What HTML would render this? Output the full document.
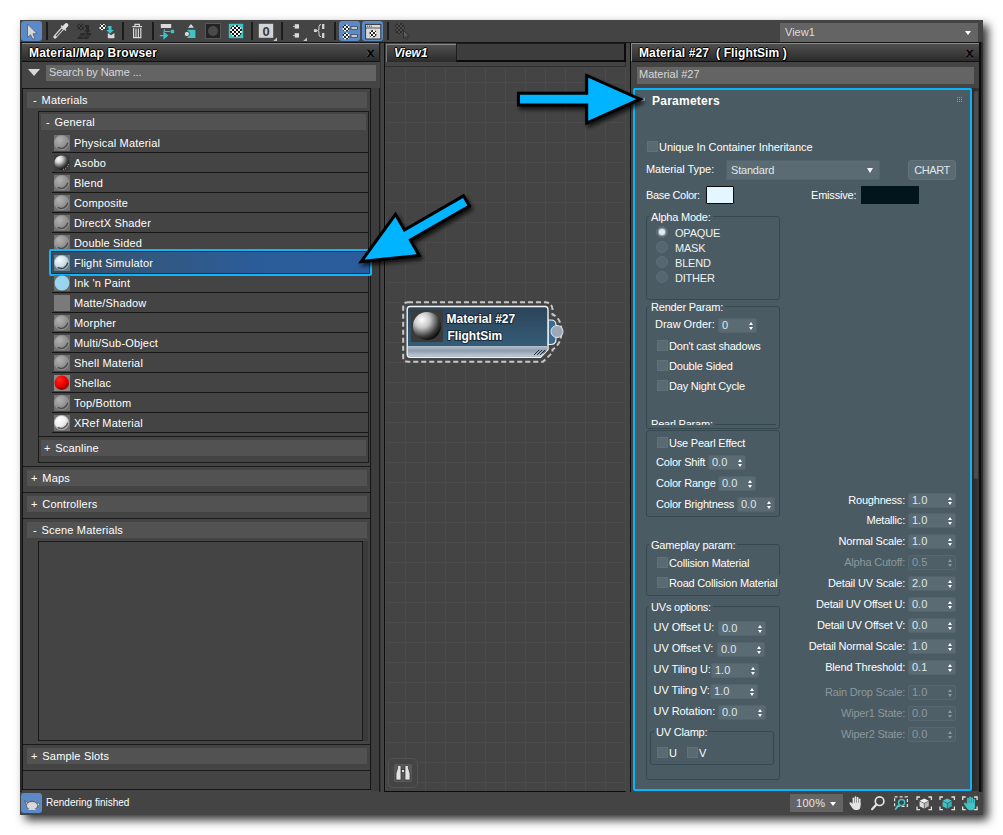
<!DOCTYPE html><html><head><meta charset="utf-8"><title>Slate Material Editor</title><style>
*{box-sizing:border-box;margin:0;padding:0}
html,body{width:1003px;height:835px;overflow:hidden;background:#fff}
body{position:relative;font-family:"Liberation Sans",sans-serif;font-size:11px;color:#fff;line-height:13px}
.a{position:absolute}
.t{position:absolute;white-space:nowrap;line-height:13px;height:13px}
.lp .t{letter-spacing:.17px}
.lp .ht b{font-weight:normal;margin-right:1.5px}
.rp .t,.rp .rl,.rp .gl{letter-spacing:-.2px}
#win{position:absolute;left:20px;top:20px;width:963px;height:795px;background:#444;box-shadow:5px 5px 9px rgba(0,0,0,.8)}
.sep{position:absolute;top:22px;width:1.5px;height:18px;background:#1c1c1c}
.tb{position:absolute;border-radius:3px;background:#5b8ac6}
.title{position:absolute;height:19px;background:linear-gradient(#4f4f4f,#2b2b2b);border-top:1px solid #8a8a8a;border-bottom:1px solid #111;font-weight:bold;font-size:12px;line-height:18px;letter-spacing:.2px;color:#fff;text-shadow:1px 1px 0 #000,-1px 0 0 #000,0 -1px 0 #000,1px 0 0 #000,0 1px 0 #000;white-space:nowrap}
.hdr{position:absolute;background:#525252;height:16px}
.row{position:absolute;left:52px;width:316px;height:20px;border-bottom:1px solid #151515}
.ico{position:absolute;left:54px;width:16px;height:16px}
.grp{position:absolute;border:1px solid #35474f;border-radius:3px}
.gl{position:absolute;background:#4a5b63;padding:0 2px;white-space:nowrap;line-height:13px;height:13px}
.cb{position:absolute;width:10.5px;height:10.5px;background:#5a6a72;border:1px solid #61717a}
.sp{position:absolute;height:15px;background:#5b6b73;border:1px solid #53646c;border-radius:2px;color:#dfe8ec;padding-left:3px;line-height:12px;font-size:11px}
.sp.d{background:#4e5f67;border-color:#56676f;color:#8c9aa2}
.sp:after{content:"";position:absolute;right:3px;top:3px;border:2.5px solid transparent;border-top:0;border-bottom:3px solid #fff}
.sp:before{content:"";position:absolute;right:3px;top:8px;border:2.5px solid transparent;border-bottom:0;border-top:3px solid #fff}
.sp.d:after{border-bottom-color:#8c989e}.sp.d:before{border-top-color:#8c989e}
.rl{position:absolute;right:98px;white-space:nowrap;text-align:right;line-height:13px}
.dis{color:#8c989e}
.rad{position:absolute;width:12px;height:12px;border-radius:50%;background:#566670;border:1px solid #5e6e78}
</style></head><body><svg width="0" height="0" style="position:absolute"><defs>
<radialGradient id="g1" cx=".36" cy=".32" r=".75"><stop offset="0" stop-color="#b2b2b2"/><stop offset=".6" stop-color="#949494"/><stop offset="1" stop-color="#808080"/></radialGradient>
<radialGradient id="g2" cx=".3" cy=".25" r=".85"><stop offset="0" stop-color="#fff"/><stop offset=".3" stop-color="#d0d0d0"/><stop offset=".7" stop-color="#404040"/><stop offset="1" stop-color="#000"/></radialGradient>
<radialGradient id="g3" cx=".35" cy=".3" r=".8"><stop offset="0" stop-color="#ff2a1a"/><stop offset=".5" stop-color="#f00000"/><stop offset="1" stop-color="#a80000"/></radialGradient>
<radialGradient id="g4" cx=".35" cy=".3" r=".8"><stop offset="0" stop-color="#fff"/><stop offset=".55" stop-color="#ececec"/><stop offset="1" stop-color="#a8a8a8"/></radialGradient>
<radialGradient id="g5" cx=".35" cy=".3" r=".8"><stop offset="0" stop-color="#f4fbff"/><stop offset=".55" stop-color="#cfe0e8"/><stop offset="1" stop-color="#8aa2ae"/></radialGradient>
</defs></svg>
<div id="win"></div>
<div class="tb" style="left:21px;top:21px;width:21px;height:20px"></div>
<div class="sep" style="left:46px"></div>
<div class="sep" style="left:122px"></div>
<div class="sep" style="left:152px"></div>
<div class="sep" style="left:251px"></div>
<div class="sep" style="left:281px"></div>
<div class="sep" style="left:334px"></div>
<div class="sep" style="left:387px"></div>
<div class="tb" style="left:339px;top:21px;width:21px;height:20px"></div>
<div class="tb" style="left:362px;top:21px;width:21px;height:20px"></div>
<svg class="a" style="left:0;top:0" width="1003" height="44" viewBox="0 0 1003 44"><path d="M27.5,24 L27.5,37.5 L30.6,34.8 L32.8,39.3 L35,38.2 L32.9,33.9 L37,33.5 Z" fill="#d6d6d6" stroke="#4a5a70" stroke-width=".8"/><g stroke="#d9d9d9" fill="none" stroke-linecap="round"><path d="M55,37 L57,34.5 L63.5,27.5" stroke-width="3.4"/><path d="M56.4,35.6 L63.5,27.8" stroke="#444" stroke-width="1.3"/><path d="M63.8,27.8 L66.4,25.2" stroke-width="4" stroke="#e2e2e2"/><path d="M61.5,26 L65.5,30" stroke-width="1.6"/></g><clipPath id="ck3"><circle cx="80.5" cy="27" r="3.6"/></clipPath><g clip-path="url(#ck3)"><rect x="76.9" y="23.4" width="7.2" height="7.2" fill="#262626"/><rect x="76" y="23" width="2" height="2" fill="#444"/><rect x="76" y="27" width="2" height="2" fill="#444"/><rect x="76" y="31" width="2" height="2" fill="#444"/><rect x="78" y="25" width="2" height="2" fill="#444"/><rect x="78" y="29" width="2" height="2" fill="#444"/><rect x="80" y="23" width="2" height="2" fill="#444"/><rect x="80" y="27" width="2" height="2" fill="#444"/><rect x="80" y="31" width="2" height="2" fill="#444"/><rect x="82" y="25" width="2" height="2" fill="#444"/><rect x="82" y="29" width="2" height="2" fill="#444"/><rect x="84" y="23" width="2" height="2" fill="#444"/><rect x="84" y="27" width="2" height="2" fill="#444"/><rect x="84" y="31" width="2" height="2" fill="#444"/></g><path d="M85,25 h4 v5 h2 l-3.5,3.5 l-3.5,-3.5 h2 v-2.5 h-1 z" fill="#2a2a2a"/><path d="M81,33 h11 l-4,6 h-11 z" fill="#2a2a2a"/><path d="M79,36 h11 M86.5,33 l-4,6" stroke="#444" stroke-width=".8"/><clipPath id="ck4"><circle cx="102.5" cy="27" r="3.2"/></clipPath><g clip-path="url(#ck4)"><rect x="99.3" y="23.8" width="6.4" height="6.4" fill="#333"/><rect x="99" y="23" width="2" height="2" fill="#fff"/><rect x="99" y="27" width="2" height="2" fill="#fff"/><rect x="99" y="31" width="2" height="2" fill="#fff"/><rect x="101" y="25" width="2" height="2" fill="#fff"/><rect x="101" y="29" width="2" height="2" fill="#fff"/><rect x="103" y="23" width="2" height="2" fill="#fff"/><rect x="103" y="27" width="2" height="2" fill="#fff"/><rect x="103" y="31" width="2" height="2" fill="#fff"/><rect x="105" y="25" width="2" height="2" fill="#fff"/><rect x="105" y="29" width="2" height="2" fill="#fff"/><rect x="107" y="23" width="2" height="2" fill="#fff"/><rect x="107" y="27" width="2" height="2" fill="#fff"/><rect x="107" y="31" width="2" height="2" fill="#fff"/></g><path d="M108.5,26 h3 v4 h2.3 l-3.8,3.8 l-3.8,-3.8 h2.3 v-2.2 h-1.2 z" fill="#3fc3c6"/><path d="M107.8,33 l3.3,2.2 l3.3,-2.2 v5.2 h-6.6 z" fill="#d9d9d9"/><g fill="none" stroke="#d9d9d9" stroke-width="1.2"><path d="M132.3,26.6 h9.8"/><path d="M135,26 v-1.6 h4.4 v1.6"/><path d="M133.6,28 v9.6 h7.2 v-9.6"/><path d="M136,28.5 v8.8 M138.4,28.5 v8.8"/></g><rect x="160.8" y="24" width="10.4" height="4" fill="#d9d9d9"/><path d="M164.3,29.3 v2.2 h5.8" fill="none" stroke="#3fc3c6" stroke-width="1.2"/><rect x="170.7" y="29.8" width="3.4" height="3.4" fill="#3fc3c6"/><path d="M159.8,35.6 h5 M164,32.8 l3.4,2.8 l-3.4,2.8 z" fill="#3fc3c6" stroke="#3fc3c6" stroke-width="1.2"/><path d="M188,27.8 l3,-3.8 l3,3.8 z" fill="#d9d9d9"/><rect x="187.4" y="29.8" width="8" height="8.2" fill="#3fc3c6"/><circle cx="186.9" cy="34" r="2.6" fill="#d9d9d9" stroke="#333" stroke-width=".8"/><rect x="205.5" y="23.5" width="15" height="15" fill="#232323" stroke="#575757" stroke-width="1"/><circle cx="213" cy="31" r="5" fill="#4a4a4a"/><rect x="228.8" y="23.8" width="14.4" height="14.4" fill="#3fc3c6"/><clipPath id="ck9"><circle cx="236" cy="31" r="6"/></clipPath><g clip-path="url(#ck9)"><rect x="230" y="25" width="12" height="12" fill="#111"/><rect x="230" y="25" width="2" height="2" fill="#fff"/><rect x="230" y="29" width="2" height="2" fill="#fff"/><rect x="230" y="33" width="2" height="2" fill="#fff"/><rect x="230" y="37" width="2" height="2" fill="#fff"/><rect x="232" y="27" width="2" height="2" fill="#fff"/><rect x="232" y="31" width="2" height="2" fill="#fff"/><rect x="232" y="35" width="2" height="2" fill="#fff"/><rect x="232" y="39" width="2" height="2" fill="#fff"/><rect x="234" y="25" width="2" height="2" fill="#fff"/><rect x="234" y="29" width="2" height="2" fill="#fff"/><rect x="234" y="33" width="2" height="2" fill="#fff"/><rect x="234" y="37" width="2" height="2" fill="#fff"/><rect x="236" y="27" width="2" height="2" fill="#fff"/><rect x="236" y="31" width="2" height="2" fill="#fff"/><rect x="236" y="35" width="2" height="2" fill="#fff"/><rect x="236" y="39" width="2" height="2" fill="#fff"/><rect x="238" y="25" width="2" height="2" fill="#fff"/><rect x="238" y="29" width="2" height="2" fill="#fff"/><rect x="238" y="33" width="2" height="2" fill="#fff"/><rect x="238" y="37" width="2" height="2" fill="#fff"/><rect x="240" y="27" width="2" height="2" fill="#fff"/><rect x="240" y="31" width="2" height="2" fill="#fff"/><rect x="240" y="35" width="2" height="2" fill="#fff"/><rect x="240" y="39" width="2" height="2" fill="#fff"/><rect x="242" y="25" width="2" height="2" fill="#fff"/><rect x="242" y="29" width="2" height="2" fill="#fff"/><rect x="242" y="33" width="2" height="2" fill="#fff"/><rect x="242" y="37" width="2" height="2" fill="#fff"/><rect x="244" y="27" width="2" height="2" fill="#fff"/><rect x="244" y="31" width="2" height="2" fill="#fff"/><rect x="244" y="35" width="2" height="2" fill="#fff"/><rect x="244" y="39" width="2" height="2" fill="#fff"/></g><rect x="258.8" y="23.8" width="14.4" height="14" fill="#d4d4d4"/><text x="266" y="35.6" text-anchor="middle" font-family="Liberation Sans, sans-serif" font-weight="bold" font-size="13" fill="#3a3a3a">0</text><path d="M277,37.4 v3.6 h-3.8 z" fill="#c8c8c8"/><rect x="294.7" y="24.2" width="4.3" height="4.4" fill="#d9d9d9"/><rect x="294.7" y="33.2" width="4.3" height="4.4" fill="#d9d9d9"/><rect x="293.2" y="26" width="1.5" height="1" fill="#d9d9d9"/><rect x="293.2" y="35" width="1.5" height="1" fill="#d9d9d9"/><path d="M307,37.4 v3.6 h-3.8 z" fill="#c8c8c8"/><rect x="314" y="29.2" width="2.8" height="2.8" fill="#d9d9d9"/><path d="M321,24.5 q-2,0 -2,2 v2.5 q0,1.6 -1.6,1.6 q1.6,0 1.6,1.6 v2.5 q0,2 2,2" fill="none" stroke="#d9d9d9" stroke-width="1"/><rect x="322.1" y="24" width="2.2" height="5" fill="#d9d9d9"/><rect x="322.1" y="33" width="2.2" height="5" fill="#d9d9d9"/><clipPath id="ck13a"><circle cx="346" cy="28" r="3.6"/></clipPath><g clip-path="url(#ck13a)"><rect x="342.4" y="24.4" width="7.2" height="7.2" fill="#222"/><rect x="342" y="24" width="2" height="2" fill="#fff"/><rect x="342" y="28" width="2" height="2" fill="#fff"/><rect x="342" y="32" width="2" height="2" fill="#fff"/><rect x="344" y="26" width="2" height="2" fill="#fff"/><rect x="344" y="30" width="2" height="2" fill="#fff"/><rect x="346" y="24" width="2" height="2" fill="#fff"/><rect x="346" y="28" width="2" height="2" fill="#fff"/><rect x="346" y="32" width="2" height="2" fill="#fff"/><rect x="348" y="26" width="2" height="2" fill="#fff"/><rect x="348" y="30" width="2" height="2" fill="#fff"/><rect x="350" y="24" width="2" height="2" fill="#fff"/><rect x="350" y="28" width="2" height="2" fill="#fff"/><rect x="350" y="32" width="2" height="2" fill="#fff"/></g><clipPath id="ck13b"><circle cx="346" cy="36" r="3.6"/></clipPath><g clip-path="url(#ck13b)"><rect x="342.4" y="32.4" width="7.2" height="7.2" fill="#222"/><rect x="342" y="32" width="2" height="2" fill="#fff"/><rect x="342" y="36" width="2" height="2" fill="#fff"/><rect x="342" y="40" width="2" height="2" fill="#fff"/><rect x="344" y="34" width="2" height="2" fill="#fff"/><rect x="344" y="38" width="2" height="2" fill="#fff"/><rect x="346" y="32" width="2" height="2" fill="#fff"/><rect x="346" y="36" width="2" height="2" fill="#fff"/><rect x="346" y="40" width="2" height="2" fill="#fff"/><rect x="348" y="34" width="2" height="2" fill="#fff"/><rect x="348" y="38" width="2" height="2" fill="#fff"/><rect x="350" y="32" width="2" height="2" fill="#fff"/><rect x="350" y="36" width="2" height="2" fill="#fff"/><rect x="350" y="40" width="2" height="2" fill="#fff"/></g><rect x="351" y="26.8" width="6.4" height="2.4" fill="#eee" stroke="#333" stroke-width=".8"/><rect x="351" y="34.8" width="6.4" height="2.4" fill="#eee" stroke="#333" stroke-width=".8"/><rect x="365.6" y="24.4" width="15.2" height="14.6" fill="#dadada" stroke="#333" stroke-width="1"/><path d="M365.6,28 h15.2" stroke="#333" stroke-width=".8"/><path d="M367.2,26.2 h4.6" stroke="#333" stroke-width="1" stroke-dasharray="1 .8"/><clipPath id="ck14"><circle cx="373" cy="33.8" r="3.7"/></clipPath><g clip-path="url(#ck14)"><rect x="369.3" y="30.099999999999998" width="7.4" height="7.4" fill="#222"/><rect x="369" y="30" width="2" height="2" fill="#fff"/><rect x="369" y="34" width="2" height="2" fill="#fff"/><rect x="369" y="38" width="2" height="2" fill="#fff"/><rect x="371" y="32" width="2" height="2" fill="#fff"/><rect x="371" y="36" width="2" height="2" fill="#fff"/><rect x="373" y="30" width="2" height="2" fill="#fff"/><rect x="373" y="34" width="2" height="2" fill="#fff"/><rect x="373" y="38" width="2" height="2" fill="#fff"/><rect x="375" y="32" width="2" height="2" fill="#fff"/><rect x="375" y="36" width="2" height="2" fill="#fff"/><rect x="377" y="30" width="2" height="2" fill="#fff"/><rect x="377" y="34" width="2" height="2" fill="#fff"/><rect x="377" y="38" width="2" height="2" fill="#fff"/></g><clipPath id="ck15"><circle cx="399.8" cy="28.5" r="5.5"/></clipPath><g clip-path="url(#ck15)"><rect x="394.3" y="23.0" width="11.0" height="11.0" fill="#2b2b2b"/><rect x="394" y="23" width="2" height="2" fill="#505050"/><rect x="394" y="27" width="2" height="2" fill="#505050"/><rect x="394" y="31" width="2" height="2" fill="#505050"/><rect x="394" y="35" width="2" height="2" fill="#505050"/><rect x="396" y="25" width="2" height="2" fill="#505050"/><rect x="396" y="29" width="2" height="2" fill="#505050"/><rect x="396" y="33" width="2" height="2" fill="#505050"/><rect x="398" y="23" width="2" height="2" fill="#505050"/><rect x="398" y="27" width="2" height="2" fill="#505050"/><rect x="398" y="31" width="2" height="2" fill="#505050"/><rect x="398" y="35" width="2" height="2" fill="#505050"/><rect x="400" y="25" width="2" height="2" fill="#505050"/><rect x="400" y="29" width="2" height="2" fill="#505050"/><rect x="400" y="33" width="2" height="2" fill="#505050"/><rect x="402" y="23" width="2" height="2" fill="#505050"/><rect x="402" y="27" width="2" height="2" fill="#505050"/><rect x="402" y="31" width="2" height="2" fill="#505050"/><rect x="402" y="35" width="2" height="2" fill="#505050"/><rect x="404" y="25" width="2" height="2" fill="#505050"/><rect x="404" y="29" width="2" height="2" fill="#505050"/><rect x="404" y="33" width="2" height="2" fill="#505050"/><rect x="406" y="23" width="2" height="2" fill="#505050"/><rect x="406" y="27" width="2" height="2" fill="#505050"/><rect x="406" y="31" width="2" height="2" fill="#505050"/><rect x="406" y="35" width="2" height="2" fill="#505050"/></g><path d="M403.5,30.5 v8 l2,-1.8 l1.4,2.8 l1.3,-.7 l-1.4,-2.7 l2.6,-.2 z" fill="#5a5a5a" stroke="#2b2b2b" stroke-width=".8"/></svg>
<div class="a" style="left:780px;top:23px;width:198px;height:19px;background:#646464"></div>
<div class="t" style="left:785px;top:26px;color:#dcdcdc;font-size:11px">View1</div>
<div class="a" style="left:965px;top:31px;border:3px solid transparent;border-bottom:0;border-top:4px solid #fff"></div>
<div class="lp">
<div class="a" style="left:379px;top:42px;width:2px;height:750px;background:linear-gradient(90deg,#1c1c1c 50%,#333 50%)"></div>
<div class="a" style="left:20px;top:42px;width:2px;height:750px;background:#2a2a2a"></div>
<div class="title" style="left:22px;top:43px;width:357px;padding-left:7px">Material/Map Browser</div>
<div class="t" style="left:367px;top:46px;font-weight:bold;font-size:13px;color:#000;letter-spacing:0;-webkit-text-stroke:.5px #000;text-shadow:0 0 1px #aaa,0 0 1px #aaa,.5px 0 0 #000">x</div>
<div class="a" style="left:22px;top:62px;width:358px;height:26px;background:#444"></div>
<div class="a" style="left:28px;top:69px;border:6px solid transparent;border-bottom:0;border-top:7px solid #d8d8d8"></div>
<div class="a" style="left:46px;top:65px;width:330px;height:16px;background:#646464"></div>
<div class="t" style="left:49px;top:66px;color:#d6d6d6;font-size:11px;letter-spacing:-.09px">Search by Name ...</div>
<div class="a" style="left:22px;top:88px;width:349px;height:702px;background:#444;border:1px solid #141414"></div>
<div class="a" style="left:371px;top:88px;width:8px;height:703px;background:#3c3c3c"></div>
<div class="hdr" style="left:27px;top:92px;width:340px"></div><div class="t ht" style="left:33px;top:94px"><b>-</b> Materials</div>
<div class="a" style="left:38px;top:111px;width:331px;height:352px;border:1px solid #1a1a1a"></div>
<div class="hdr" style="left:41px;top:114px;width:325px"></div><div class="t ht" style="left:46px;top:116px"><b>-</b> General</div>
<div class="row" style="top:133px"></div>
<div class="ico" style="top:135px" ><svg width="16" height="16"><rect width="16" height="16" fill="#707070"/><circle cx="7.6" cy="7.6" r="7.2" fill="url(#g1)" stroke="#9c9c9c" stroke-width=".7"/><path d="M4.2,12.6 A6.4,6.4 0 0 0 13.6,8.2" fill="none" stroke="#4e4e4e" stroke-width="1.5" stroke-linecap="round"/></svg></div>
<div class="t" style="left:74px;top:137px">Physical Material</div>
<div class="row" style="top:153px"></div>
<div class="ico" style="top:155px" ><svg width="16" height="16"><rect width="16" height="16" fill="#3c3c3c"/><circle cx="7.6" cy="7.6" r="7.2" fill="url(#g2)"/><path d="M9,14.4 A7,7 0 0 0 14.4,9" fill="none" stroke="#cfcfcf" stroke-width=".9" stroke-dasharray="1.2 1"/></svg></div>
<div class="t" style="left:74px;top:157px">Asobo</div>
<div class="row" style="top:173px"></div>
<div class="ico" style="top:175px" ><svg width="16" height="16"><rect width="16" height="16" fill="#707070"/><circle cx="7.6" cy="7.6" r="7.2" fill="url(#g1)" stroke="#9c9c9c" stroke-width=".7"/><path d="M4.2,12.6 A6.4,6.4 0 0 0 13.6,8.2" fill="none" stroke="#4e4e4e" stroke-width="1.5" stroke-linecap="round"/></svg></div>
<div class="t" style="left:74px;top:177px">Blend</div>
<div class="row" style="top:193px"></div>
<div class="ico" style="top:195px" ><svg width="16" height="16"><rect width="16" height="16" fill="#707070"/><circle cx="7.6" cy="7.6" r="7.2" fill="url(#g1)" stroke="#9c9c9c" stroke-width=".7"/><path d="M4.2,12.6 A6.4,6.4 0 0 0 13.6,8.2" fill="none" stroke="#4e4e4e" stroke-width="1.5" stroke-linecap="round"/></svg></div>
<div class="t" style="left:74px;top:197px">Composite</div>
<div class="row" style="top:213px"></div>
<div class="ico" style="top:215px" ><svg width="16" height="16"><rect width="16" height="16" fill="#707070"/><circle cx="7.6" cy="7.6" r="7.2" fill="url(#g1)" stroke="#9c9c9c" stroke-width=".7"/><path d="M4.2,12.6 A6.4,6.4 0 0 0 13.6,8.2" fill="none" stroke="#4e4e4e" stroke-width="1.5" stroke-linecap="round"/></svg></div>
<div class="t" style="left:74px;top:217px">DirectX Shader</div>
<div class="row" style="top:233px"></div>
<div class="ico" style="top:235px" ><svg width="16" height="16"><rect width="16" height="16" fill="#707070"/><circle cx="7.6" cy="7.6" r="7.2" fill="url(#g1)" stroke="#9c9c9c" stroke-width=".7"/><path d="M4.2,12.6 A6.4,6.4 0 0 0 13.6,8.2" fill="none" stroke="#4e4e4e" stroke-width="1.5" stroke-linecap="round"/></svg></div>
<div class="t" style="left:74px;top:237px">Double Sided</div>
<div class="a" style="left:49px;top:249px;width:323px;height:27px;border:2px solid #12b4f6;border-radius:2px;background:#22303c"><div style="position:absolute;left:1px;top:1px;right:1px;bottom:1px;background:linear-gradient(90deg,#3a4c5c,#33587f 30%,#2b5c9a 65%,#2a5c9c)"></div></div>
<div class="ico" style="top:255px" ><svg width="16" height="16"><rect width="16" height="16" fill="#687d8a"/><circle cx="7.6" cy="7.6" r="7.2" fill="url(#g5)" stroke="#b4c6d0" stroke-width=".6"/><path d="M4.2,12.6 A6.4,6.4 0 0 0 13.6,8.2" fill="none" stroke="#33444e" stroke-width="1.4" stroke-linecap="round"/></svg></div>
<div class="t" style="left:74px;top:257px">Flight Simulator</div>
<div class="row" style="top:273px"></div>
<div class="ico" style="top:275px" ><svg width="16" height="16"><rect width="16" height="16" fill="#6c6c6c"/><circle cx="8" cy="8" r="7.4" fill="#97d6ee"/></svg></div>
<div class="t" style="left:74px;top:277px">Ink 'n Paint</div>
<div class="row" style="top:293px"></div>
<div class="ico" style="top:295px" ><svg width="16" height="16"><rect width="16" height="16" fill="#7a7a7a"/></svg></div>
<div class="t" style="left:74px;top:297px">Matte/Shadow</div>
<div class="row" style="top:313px"></div>
<div class="ico" style="top:315px" ><svg width="16" height="16"><rect width="16" height="16" fill="#707070"/><circle cx="7.6" cy="7.6" r="7.2" fill="url(#g1)" stroke="#9c9c9c" stroke-width=".7"/><path d="M4.2,12.6 A6.4,6.4 0 0 0 13.6,8.2" fill="none" stroke="#4e4e4e" stroke-width="1.5" stroke-linecap="round"/></svg></div>
<div class="t" style="left:74px;top:317px">Morpher</div>
<div class="row" style="top:333px"></div>
<div class="ico" style="top:335px" ><svg width="16" height="16"><rect width="16" height="16" fill="#707070"/><circle cx="7.6" cy="7.6" r="7.2" fill="url(#g1)" stroke="#9c9c9c" stroke-width=".7"/><path d="M4.2,12.6 A6.4,6.4 0 0 0 13.6,8.2" fill="none" stroke="#4e4e4e" stroke-width="1.5" stroke-linecap="round"/></svg></div>
<div class="t" style="left:74px;top:337px">Multi/Sub-Object</div>
<div class="row" style="top:353px"></div>
<div class="ico" style="top:355px" ><svg width="16" height="16"><rect width="16" height="16" fill="#707070"/><circle cx="7.6" cy="7.6" r="7.2" fill="url(#g1)" stroke="#9c9c9c" stroke-width=".7"/><path d="M4.2,12.6 A6.4,6.4 0 0 0 13.6,8.2" fill="none" stroke="#4e4e4e" stroke-width="1.5" stroke-linecap="round"/></svg></div>
<div class="t" style="left:74px;top:357px">Shell Material</div>
<div class="row" style="top:373px"></div>
<div class="ico" style="top:375px" ><svg width="16" height="16"><rect width="16" height="16" fill="#868a88"/><circle cx="7.8" cy="7.8" r="7.3" fill="url(#g3)"/><path d="M4.4,12.6 A6.4,6.4 0 0 0 13.4,8.6" fill="none" stroke="#8a0000" stroke-width="1.4" stroke-linecap="round"/></svg></div>
<div class="t" style="left:74px;top:377px">Shellac</div>
<div class="row" style="top:393px"></div>
<div class="ico" style="top:395px" ><svg width="16" height="16"><rect width="16" height="16" fill="#707070"/><circle cx="7.6" cy="7.6" r="7.2" fill="url(#g1)" stroke="#9c9c9c" stroke-width=".7"/><path d="M4.2,12.6 A6.4,6.4 0 0 0 13.6,8.2" fill="none" stroke="#4e4e4e" stroke-width="1.5" stroke-linecap="round"/></svg></div>
<div class="t" style="left:74px;top:397px">Top/Bottom</div>
<div class="row" style="top:413px"></div>
<div class="ico" style="top:415px" ><svg width="16" height="16"><rect width="16" height="16" fill="#707070"/><circle cx="7.6" cy="7.6" r="7.2" fill="url(#g4)" stroke="#bdbdbd" stroke-width=".7"/><path d="M4.2,12.6 A6.4,6.4 0 0 0 13.6,8.2" fill="none" stroke="#5a5a5a" stroke-width="1.5" stroke-linecap="round"/></svg></div>
<div class="t" style="left:74px;top:417px">XRef Material</div>
<div class="a" style="left:39px;top:436px;width:329px;height:1px;background:#1a1a1a"></div>
<div class="hdr" style="left:41px;top:440px;width:325px"></div><div class="t ht" style="left:44px;top:442px"><b>+</b> Scanline</div>
<div class="a" style="left:23px;top:466px;width:347px;height:1px;background:#1a1a1a"></div>
<div class="hdr" style="left:27px;top:470px;width:340px"></div><div class="t ht" style="left:31px;top:472px"><b>+</b> Maps</div>
<div class="a" style="left:23px;top:492px;width:347px;height:1px;background:#1a1a1a"></div>
<div class="hdr" style="left:27px;top:496px;width:340px"></div><div class="t ht" style="left:31px;top:498px"><b>+</b> Controllers</div>
<div class="a" style="left:23px;top:518px;width:347px;height:1px;background:#1a1a1a"></div>
<div class="hdr" style="left:27px;top:522px;width:340px"></div><div class="t ht" style="left:33px;top:524px"><b>-</b> Scene Materials</div>
<div class="a" style="left:23px;top:744px;width:347px;height:1px;background:#1a1a1a"></div>
<div class="hdr" style="left:27px;top:748px;width:340px"></div><div class="t ht" style="left:31px;top:750px"><b>+</b> Sample Slots</div>
<div class="a" style="left:38px;top:541px;width:325px;height:200px;border:1px solid #1a1a1a"></div>
<div class="a" style="left:363px;top:541px;width:5px;height:200px;background:#3a3a3a"></div>
<div class="a" style="left:23px;top:770px;width:347px;height:1px;background:#1a1a1a"></div>
</div>
<div class="a" style="left:384px;top:42px;width:242px;height:750px;background:#444;border-left:1px solid #0c0c0c;border-right:1px solid #2c2c2c;border-bottom:1px solid #0c0c0c"></div>
<div class="title" style="left:386px;top:44px;width:70px;height:18px;line-height:17px;padding-left:7px;font-style:italic;letter-spacing:0;border-left:1px solid #777;border-bottom:0">View1</div>
<div class="a" style="left:456px;top:43px;width:170px;height:19px;background:#3d3d3d;border:1px solid #1c1c1c;border-right:2px solid #0a0a0a;border-bottom:2px solid #0a0a0a"></div>
<div class="a" id="grid" style="left:385px;top:66px;width:241px;height:725px;background-color:#444;background-image:linear-gradient(90deg,#4b4b4b 1px,transparent 1px),linear-gradient(#4b4b4b 1px,transparent 1px);background-size:20px 20px;background-position:0px -4px"></div>
<div class="a" style="left:385px;top:66px;width:241px;height:1px;background:#2e2e2e"></div>
<svg class="a" style="left:395px;top:295px" width="175" height="75" viewBox="395 295 175 75">
<defs>
<linearGradient id="nb" x1="0" y1="0" x2="0" y2="1"><stop offset="0" stop-color="#2b4358"/><stop offset="1" stop-color="#386380"/></linearGradient>
<linearGradient id="nf" x1="0" y1="0" x2="0" y2="1"><stop offset="0" stop-color="#b4c0cc"/><stop offset=".45" stop-color="#8c9cac"/><stop offset="1" stop-color="#c4ccd4"/></linearGradient>
<radialGradient id="sph" cx=".32" cy=".28" r=".8"><stop offset="0" stop-color="#fff"/><stop offset=".35" stop-color="#c8c8c8"/><stop offset=".75" stop-color="#3a3a3a"/><stop offset="1" stop-color="#000"/></radialGradient>
</defs>
<path d="M408,302.2 H545 Q551.5,302.2 552.5,309 V314.5 Q561.5,318.5 561.5,331.5 Q561.5,344 552.5,349.5 L552.5,352.5 L543,361.8 H408 Q403.2,361.8 403.2,357 V307 Q403.2,302.2 408,302.2 Z" fill="none" stroke="#c6c6c6" stroke-width="2" stroke-dasharray="5 3"/>
<path d="M548,320 H551 Q556,320 556,325 V339 Q556,344.5 551,344.5 H548 Z" fill="#3a6a8c" stroke="#e8eef2" stroke-width="1.2"/>
<path d="M410,306.5 H545 Q548,306.5 548,309.5 V349.5 L540.5,357.2 H410 Q407.2,357.2 407.2,354.2 V309.5 Q407.2,306.5 410,306.5 Z" fill="url(#nb)" stroke="#f2f6f8" stroke-width="1.4"/>
<path d="M408,346 H547.3 V349.3 L540.2,356.5 H410 Q408,356.5 408,354.5 Z" fill="url(#nf)"/>
<path d="M534,355 l5,-5 M537,355 l5,-5 M540,355 l5,-5 M543,353.5 l3,-3" stroke="#222e38" stroke-width="1"/>
<rect x="411" y="310" width="32" height="32" fill="#3b3b3b"/>
<circle cx="427" cy="326" r="14" fill="url(#sph)"/>
<circle cx="557" cy="331.5" r="6" fill="#9aa8ba" stroke="#dde4ea" stroke-width="1"/>
<text x="446.5" y="323" font-family="Liberation Sans, sans-serif" font-weight="bold" font-size="12" fill="#fff" stroke="#1a2a38" stroke-width="2" paint-order="stroke" stroke-linejoin="round">Material #27</text>
<text x="447.5" y="340" font-family="Liberation Sans, sans-serif" font-weight="bold" font-size="12" fill="#fff" stroke="#1a2a38" stroke-width="2" paint-order="stroke" stroke-linejoin="round">FlightSim</text>
</svg>
<div class="a" style="left:388px;top:758px;width:30px;height:30px;border:1px solid #535353;border-radius:5px;background:#444"></div>
<div class="a" style="left:394px;top:764px;width:18px;height:18px;border-radius:2px;background:#595959"></div>
<div class="a" style="left:630px;top:42px;width:1px;height:750px;background:#0c0c0c"></div>
<div class="a" style="left:20px;top:42px;width:963px;height:1px;background:#141414"></div>
<div class="title" style="left:631px;top:43px;width:348px;padding-left:7px;border-left:1px solid #888;letter-spacing:.12px">Material #27 &nbsp;( FlightSim )</div>
<div class="t" style="left:966px;top:46px;font-weight:bold;font-size:13px;color:#000;letter-spacing:0;-webkit-text-stroke:.5px #000;text-shadow:0 0 1px #aaa,0 0 1px #aaa,.5px 0 0 #000">x</div>
<div class="a" style="left:631px;top:62px;width:348px;height:26px;background:#444"></div>
<div class="a" style="left:637px;top:67px;width:337px;height:17px;background:#646464"></div>
<div class="t" style="left:639px;top:68px;color:#d8d8d8;font-size:11px">Material #27</div>
<div class="a" id="roll" style="left:633px;top:88px;width:339px;height:703px;background:#4a5b63;border:2px solid #06b6fb;border-radius:2px"></div>
<div class="a" style="left:972px;top:88px;width:7px;height:703px;background:linear-gradient(90deg,#2a2a2a,#363636)"></div>
<div class="a" style="left:974px;top:91px;width:4px;height:388px;background:#4c4c4c;border-radius:2px"></div>
<div class="a" style="left:979px;top:42px;width:2px;height:750px;background:#0c0c0c"></div>
<div class="a" style="left:981px;top:42px;width:2px;height:750px;background:#2c2c2c"></div>
<svg class="a" style="left:956px;top:96px" width="7" height="7"><g fill="#8d9ba3"><rect x="1" y="1" width="1" height="1"/><rect x="3" y="1" width="1" height="1"/><rect x="5" y="1" width="1" height="1"/><rect x="1" y="3" width="1" height="1"/><rect x="3" y="3" width="1" height="1"/><rect x="5" y="3" width="1" height="1"/><rect x="1" y="5" width="1" height="1"/><rect x="3" y="5" width="1" height="1"/><rect x="5" y="5" width="1" height="1"/></g></svg>
<div class="a" style="left:641px;top:97px;border:2.5px solid transparent;border-right-color:#8d9ba3;border-bottom-color:#8d9ba3;width:0;height:0"></div>
<div class="t" style="left:652px;top:95px;font-weight:bold;font-size:12px;letter-spacing:.25px">Parameters</div>
<div class="rp"><div class="cb" style="left:647px;top:141px"></div>
<div class="t" style="left:659px;top:141px"><span style="letter-spacing:-.06px">Unique In Container Inheritance</span></div>
<div class="t" style="left:646px;top:163px;letter-spacing:-.05px">Material Type:</div>
<div class="a" style="left:726px;top:160px;width:154px;height:20px;background:#5b6b73;border:1px solid #53646c;border-radius:1px"></div>
<div class="t" style="left:731px;top:164px;color:#dfe8ec;font-size:11px">Standard</div>
<div class="a" style="left:867px;top:167.5px;border:3px solid transparent;border-bottom:0;border-top:5px solid #f4f4f4"></div>
<div class="a" style="left:908px;top:160px;width:48px;height:20px;background:#5b6b73;border:1px solid #637379;border-radius:3px;text-align:center;line-height:19px;letter-spacing:-.4px;color:#dfe8ec;font-size:11px">CHART</div>
<div class="t" style="left:646px;top:189px;letter-spacing:-.33px">Base Color:</div>
<div class="a" style="left:706px;top:186px;width:28px;height:18px;background:#e4f6ff;border:1px solid #0a0a0a;border-radius:1px"></div>
<div class="t" style="left:811px;top:189px">Emissive:</div>
<div class="a" style="left:861px;top:186px;width:58px;height:18px;background:#03151c"></div>
<div class="grp" style="left:646px;top:216px;width:134px;height:84px"></div>
<div class="gl" style="left:649px;top:211px">Alpha Mode:</div>
<div class="rad" style="left:656px;top:226px"></div>
<div class="t" style="left:675px;top:227px;color:#eef2f4">OPAQUE</div>
<div class="rad" style="left:656px;top:241px"></div>
<div class="t" style="left:675px;top:242px;color:#eef2f4">MASK</div>
<div class="rad" style="left:656px;top:256px"></div>
<div class="t" style="left:675px;top:257px;color:#eef2f4">BLEND</div>
<div class="rad" style="left:656px;top:271px"></div>
<div class="t" style="left:675px;top:272px;color:#eef2f4">DITHER</div>
<div class="a" style="left:659px;top:229px;width:6px;height:6px;border-radius:50%;background:#dfe8ee;box-shadow:0 0 1px 1px #9fb0ba"></div>
<div class="grp" style="left:646px;top:306px;width:134px;height:123px"></div>
<div class="gl" style="left:649px;top:301px">Render Param:</div>
<div class="t" style="left:655px;top:318px;letter-spacing:-.02px">Draw Order:</div>
<div class="sp" style="left:718px;top:318px;width:39px">0</div>
<div class="cb" style="left:657px;top:340px"></div>
<div class="t" style="left:669px;top:340px">Don't cast shadows</div>
<div class="cb" style="left:657px;top:360px"></div>
<div class="t" style="left:669px;top:360px">Double Sided</div>
<div class="cb" style="left:657px;top:380px"></div>
<div class="t" style="left:669px;top:380px">Day Night Cycle</div>
<div class="a" style="left:649px;top:418px;width:128px;height:7px;overflow:hidden"><div class="t" style="left:2px;top:0px">Pearl Param:</div></div>
<div class="a" style="left:715px;top:424px;width:61px;height:1px;background:#35474f"></div>
<div class="grp" style="left:646px;top:430px;width:134px;height:87px"></div>
<div class="cb" style="left:657px;top:437px"></div>
<div class="t" style="left:669px;top:437px">Use Pearl Effect</div>
<div class="t" style="left:656px;top:456px">Color Shift</div>
<div class="sp" style="left:708px;top:455px;width:38px">0.0</div>
<div class="t" style="left:656px;top:477px">Color Range</div>
<div class="sp" style="left:718px;top:476px;width:38px">0.0</div>
<div class="t" style="left:656px;top:498px">Color Brightness</div>
<div class="sp" style="left:737px;top:497px;width:38px">0.0</div>
<div class="grp" style="left:646px;top:544px;width:134px;height:52px"></div>
<div class="gl" style="left:649px;top:539px">Gameplay param:</div>
<div class="cb" style="left:657px;top:557px"></div>
<div class="t" style="left:669px;top:557px">Collision Material</div>
<div class="a" style="left:770px;top:575px;width:12px;height:14px;background:#4a5b63"></div>
<div class="cb" style="left:657px;top:577px"></div>
<div class="t" style="left:669px;top:577px">Road Collision Material</div>
<div class="grp" style="left:646px;top:606px;width:134px;height:174px"></div>
<div class="gl" style="left:649px;top:601px">UVs options:</div>
<div class="t" style="left:653.5px;top:621px;letter-spacing:-.06px">UV Offset U:</div>
<div class="sp" style="left:718px;top:621px;width:48px">0.0</div>
<div class="t" style="left:653.5px;top:642px;letter-spacing:-.06px">UV Offset V:</div>
<div class="sp" style="left:717px;top:642px;width:48px">0.0</div>
<div class="t" style="left:653.5px;top:663px;letter-spacing:-.06px">UV Tiling U:</div>
<div class="sp" style="left:711px;top:663px;width:48px">1.0</div>
<div class="t" style="left:653.5px;top:684px;letter-spacing:-.06px">UV Tiling V:</div>
<div class="sp" style="left:710px;top:684px;width:48px">1.0</div>
<div class="t" style="left:653.5px;top:705px;letter-spacing:-.06px">UV Rotation:</div>
<div class="sp" style="left:718px;top:705px;width:48px">0.0</div>
<div class="grp" style="left:650px;top:731px;width:124px;height:34px"></div>
<div class="gl" style="left:654px;top:726px">UV Clamp:</div>
<div class="cb" style="left:657px;top:747px"></div>
<div class="t" style="left:669px;top:747px">U</div>
<div class="cb" style="left:687px;top:747px"></div>
<div class="t" style="left:699px;top:747px">V</div>
<div class="rl" style="top:494px">Roughness:</div>
<div class="sp" style="left:908px;top:493px;width:48px">1.0</div>
<div class="rl" style="top:514px">Metallic:</div>
<div class="sp" style="left:908px;top:513px;width:48px">1.0</div>
<div class="rl" style="top:535px">Normal Scale:</div>
<div class="sp" style="left:908px;top:534px;width:48px">1.0</div>
<div class="rl dis" style="top:556px">Alpha Cutoff:</div>
<div class="sp d" style="left:908px;top:555px;width:48px">0.5</div>
<div class="rl" style="top:577px">Detail UV Scale:</div>
<div class="sp" style="left:908px;top:576px;width:48px">2.0</div>
<div class="rl" style="top:598px">Detail UV Offset U:</div>
<div class="sp" style="left:908px;top:597px;width:48px">0.0</div>
<div class="rl" style="top:619px">Detail UV Offset V:</div>
<div class="sp" style="left:908px;top:618px;width:48px">0.0</div>
<div class="rl" style="top:640px">Detail Normal Scale:</div>
<div class="sp" style="left:908px;top:639px;width:48px">1.0</div>
<div class="rl" style="top:661px">Blend Threshold:</div>
<div class="sp" style="left:908px;top:660px;width:48px">0.1</div>
<div class="rl dis" style="top:686px">Rain Drop Scale:</div>
<div class="sp d" style="left:908px;top:685px;width:48px">1.0</div>
<div class="rl dis" style="top:707px">Wiper1 State:</div>
<div class="sp d" style="left:908px;top:706px;width:48px">0.0</div>
<div class="rl dis" style="top:728px">Wiper2 State:</div>
<div class="sp d" style="left:908px;top:727px;width:48px">0.0</div></div>
<div class="a" style="left:20px;top:792px;width:963px;height:23px;background:#444"></div>
<div class="tb" style="left:21px;top:793px;width:21px;height:20px;border-radius:3px"></div>
<div class="t" style="left:46px;top:796px;font-size:10px">Rendering finished</div>
<div class="a" style="left:790px;top:794px;width:53px;height:18px;background:#646464"></div>
<div class="t" style="left:796px;top:797px;color:#e8e8e8;font-size:11px;letter-spacing:.3px">100%</div>
<div class="a" style="left:830px;top:802px;border:3.5px solid transparent;border-bottom:0;border-top:4px solid #fff"></div>
<svg class="a" style="left:0;top:790px" width="1003" height="26" viewBox="0 790 1003 26"><g fill="#d8d8d8" stroke="#4a4a4a" stroke-width=".7"><path d="M24.6,800.6 q2.6,.8 3.8,3.4 l-1.2,2.4 q-1.2,-3 -2.6,-5.8 z"/><path d="M37,803 q3,-.8 2.6,1.6 q-.4,1.8 -2.8,2.2 z"/><ellipse cx="32" cy="805.6" rx="5.6" ry="4.2"/><path d="M28.4,809 h7.2 v.9 h-7.2 z" stroke="none"/><path d="M30.2,801.6 q1.8,-2.6 3.6,0 z"/></g><g fill="#e4e4e4"><rect x="852.6" y="797.5" width="1.7" height="7" rx=".8"/><rect x="854.7" y="796.3" width="1.7" height="8" rx=".8"/><rect x="856.8" y="796.9" width="1.7" height="8" rx=".8"/><rect x="858.9" y="798.5" width="1.6" height="7" rx=".8"/><path d="M852.6,802.8 h7.9 v3.5 q0,3.6 -3.4,3.6 h-1.6 q-2,0 -3.2,-2 l-2.6,-4 q-.6,-1.2 .4,-1.6 q.9,-.3 1.6,.6 l.9,1.2 z"/></g><circle cx="879.6" cy="801.2" r="4.3" fill="none" stroke="#e4e4e4" stroke-width="1.7"/><path d="M876.4,804.6 l-4.3,4.6" stroke="#e4e4e4" stroke-width="2.2" stroke-linecap="round"/><rect x="894.6" y="796.9" width="12.8" height="9.4" fill="none" stroke="#e4e4e4" stroke-width="1.2" stroke-dasharray="3 2"/><circle cx="901.6" cy="802.6" r="3.1" fill="#444" stroke="#3fc3c6" stroke-width="1.4"/><path d="M899.2,805 l-3.6,4" stroke="#3fc3c6" stroke-width="1.8" stroke-linecap="round"/><path d="M917,800 v-3 h3 M928.4,797 h3 v3 M931.4,806.6 v3 h-3 M920,809.6 h-3 v-3" fill="none" stroke="#e4e4e4" stroke-width="1.3"/><path d="M924.2,798.4 l4.6,2.3 l-4.6,2.3 l-4.6,-2.3 z" fill="#f0f0f0"/><path d="M919.6,801.3 l4.3,2.2 v5 l-4.3,-2.3 z" fill="#dcdcdc"/><path d="M928.8000000000001,801.3 l-4.3,2.2 v5 l4.3,-2.3 z" fill="#b8b8b8"/><path d="M940,800 v-3 h3 M951.4,797 h3 v3 M954.4,806.6 v3 h-3 M943,809.6 h-3 v-3" fill="none" stroke="#e4e4e4" stroke-width="1.3"/><path d="M947.2,798.4 l4.6,2.3 l-4.6,2.3 l-4.6,-2.3 z" fill="#46c8cc"/><path d="M942.6,801.3 l4.3,2.2 v5 l-4.3,-2.3 z" fill="#3fc3c6"/><path d="M951.8000000000001,801.3 l-4.3,2.2 v5 l4.3,-2.3 z" fill="#36aeb2"/><path d="M962.7,800 v-3 h3 M974.1,797 h3 v3 M977.1,806.6 v3 h-3 M965.7,809.6 h-3 v-3" fill="none" stroke="#e4e4e4" stroke-width="1.3"/><g fill="#3fc3c6"><rect x="967.1" y="797.8000000000001" width="1.7" height="7" rx=".8"/><rect x="969.2" y="796.6" width="1.7" height="8" rx=".8"/><rect x="971.3" y="797.2" width="1.7" height="8" rx=".8"/><rect x="973.4" y="798.8000000000001" width="1.6" height="7" rx=".8"/><path d="M967.1,803.1 h7.9 v3.5 q0,3.6 -3.4,3.6 h-1.6 q-2,0 -3.2,-2 l-2.6,-4 q-.6,-1.2 .4,-1.6 q.9,-.3 1.6,.6 l.9,1.2 z"/></g></svg><svg class="a" style="left:394px;top:764px" width="18" height="18" viewBox="394 764 18 18"><g fill="#e2e2e2" stroke="#2a2a2a" stroke-width=".7"><path d="M396,780 v-6.5 l1.6,-5.5 v-1.4 q0,-1.2 1.2,-1.2 h1 q1.2,0 1.2,1.2 v13.4 z"/><path d="M410,780 v-6.5 l-1.6,-5.5 v-1.4 q0,-1.2 -1.2,-1.2 h-1 q-1.2,0 -1.2,1.2 v13.4 z"/><rect x="401.6" y="769.6" width="2.8" height="3"/></g></svg>
<svg class="a" style="left:0;top:0;overflow:visible" width="1003" height="835" viewBox="0 0 1003 835">
<defs><filter id="ds" x="-20%" y="-20%" width="140%" height="150%"><feGaussianBlur in="SourceAlpha" stdDeviation="2.2"/><feOffset dx="2" dy="3"/><feComponentTransfer><feFuncA type="linear" slope="0.75"/></feComponentTransfer><feMerge><feMergeNode/><feMergeNode in="SourceGraphic"/></feMerge></filter></defs>
<g filter="url(#ds)"><polygon points="518.5,93.2 586.7,93.2 586.7,75.5 640,99.2 586.7,123 586.7,105 518.5,105" fill="#00b4ff" stroke="#000" stroke-width="3" stroke-linejoin="miter"/></g>
<g filter="url(#ds)"><polygon points="518.5,93.2 586.7,93.2 586.7,75.5 640,99.2 586.7,123 586.7,105 518.5,105" fill="#00b4ff" stroke="#000" stroke-width="3" stroke-linejoin="miter" transform="translate(361.2,261.6) rotate(150) translate(-640,-99.2)"/></g>
</svg>
</body></html>
